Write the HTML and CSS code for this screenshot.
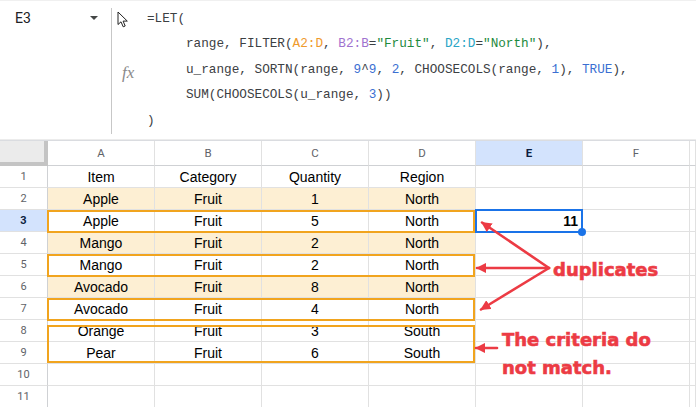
FILE: index.html
```html
<!DOCTYPE html>
<html lang="en">
<head>
<meta charset="utf-8">
<title>LET FILTER SORTN</title>
<link rel="stylesheet" href="styles.css">
</head>
<body>
<div class="page">
  <header class="fbar">
    <div class="namebox"><span class="cellref">E3</span><span class="caret"></span></div>
    <div class="sep"></div>
    <div class="fxcol">
      <svg class="cursor" width="12" height="17" viewBox="0 0 12 17"><path d="M1 1 L1 13.5 L4 10.8 L6.2 15.8 L8.2 15 L6.1 10.1 L10.3 10.1 Z" fill="#fff" stroke="#222" stroke-width="1" stroke-linejoin="round"/></svg>
      <span class="fx">fx</span>
    </div>
    <div class="formula"><div class="ln">=LET(</div><div class="ln ind">range, FILTER(<span class="r1">A2:D</span>, <span class="r2">B2:B</span>=<span class="str">"Fruit"</span>, <span class="r3">D2:D</span>=<span class="str">"North"</span>),</div><div class="ln ind">u_range, SORTN(range, <span class="num">9</span>^<span class="num">9</span>, <span class="num">2</span>, CHOOSECOLS(range, <span class="num">1</span>), <span class="num">TRUE</span>),</div><div class="ln ind">SUM(CHOOSECOLS(u_range, <span class="num">3</span>))</div><div class="ln">)</div></div>
  </header>

  <main class="sheet">
    <div class="corner"></div><div class="ch">A</div><div class="ch">B</div><div class="ch">C</div><div class="ch">D</div><div class="ch sel">E</div><div class="ch">F</div><div class="ch last"></div>

    <div class="rh">1</div><div class="c">Item</div><div class="c">Category</div><div class="c">Quantity</div><div class="c">Region</div><div class="c"></div><div class="c"></div><div class="c"></div>
    <div class="rh">2</div><div class="c hl">Apple</div><div class="c hl">Fruit</div><div class="c hl">1</div><div class="c hl">North</div><div class="c"></div><div class="c"></div><div class="c"></div>
    <div class="rh sel">3</div><div class="c">Apple</div><div class="c">Fruit</div><div class="c">5</div><div class="c">North</div><div class="c val">11</div><div class="c"></div><div class="c"></div>
    <div class="rh">4</div><div class="c hl">Mango</div><div class="c hl">Fruit</div><div class="c hl">2</div><div class="c hl">North</div><div class="c"></div><div class="c"></div><div class="c"></div>
    <div class="rh">5</div><div class="c">Mango</div><div class="c">Fruit</div><div class="c">2</div><div class="c">North</div><div class="c"></div><div class="c"></div><div class="c"></div>
    <div class="rh">6</div><div class="c hl">Avocado</div><div class="c hl">Fruit</div><div class="c hl">8</div><div class="c hl">North</div><div class="c"></div><div class="c"></div><div class="c"></div>
    <div class="rh">7</div><div class="c">Avocado</div><div class="c">Fruit</div><div class="c">4</div><div class="c">North</div><div class="c"></div><div class="c"></div><div class="c"></div>
    <div class="rh">8</div><div class="c">Orange</div><div class="c">Fruit</div><div class="c">3</div><div class="c">South</div><div class="c"></div><div class="c"></div><div class="c"></div>
    <div class="rh">9</div><div class="c">Pear</div><div class="c">Fruit</div><div class="c">6</div><div class="c">South</div><div class="c"></div><div class="c"></div><div class="c"></div>
    <div class="rh">10</div><div class="c"></div><div class="c"></div><div class="c"></div><div class="c"></div><div class="c"></div><div class="c"></div><div class="c"></div>
    <div class="rh">11</div><div class="c"></div><div class="c"></div><div class="c"></div><div class="c"></div><div class="c"></div><div class="c"></div><div class="c"></div>
  </main>

  <div class="box box-r3"></div>
  <div class="box box-r5"></div>
  <div class="box box-r7"></div>
  <div class="box box-r89"></div>
  <div class="selbox"></div>
  <div class="handle"></div>

  <svg class="notes" width="696" height="407" viewBox="0 0 696 407">
    <defs>
      <marker id="ah" viewBox="0 0 10 10" refX="9" refY="5" markerWidth="4" markerHeight="4" orient="auto-start-reverse">
        <path d="M0 0 L10 5 L0 10 Z" fill="#ec3b44"/>
      </marker>
    </defs>
    <g stroke="#ec3b44" stroke-width="2.6" fill="none" stroke-linecap="round">
      <line x1="549" y1="268" x2="482" y2="222.5" marker-end="url(#ah)"/>
      <line x1="549" y1="268" x2="477" y2="268" marker-end="url(#ah)"/>
      <line x1="549" y1="268" x2="481" y2="309.5" marker-end="url(#ah)"/>
      <line x1="497" y1="348" x2="476" y2="348" marker-end="url(#ah)"/>
    </g>
    <text class="note" x="553" y="276">duplicates</text>
    <text class="note" x="502" y="346">The criteria do</text>
    <text class="note" x="502" y="374">not match.</text>
  </svg>
</div>
</body>
</html>
```

FILE: styles.css
```css
html, body {
  margin: 0;
  padding: 0;
  background: #ffffff;
}

body {
  font-family: "Liberation Sans", Arial, sans-serif;
  color: #000;
}

.page {
  position: relative;
  width: 696px;
  height: 407px;
  overflow: hidden;
}

/* ---------- formula bar ---------- */
.fbar {
  display: flex;
  height: 140px;
  box-sizing: border-box;
  border-top: 1px solid #f0f0f0;
  border-bottom: 1px solid #ececec;
}

.namebox {
  width: 111px;
  display: flex;
  align-items: flex-start;
  justify-content: space-between;
  padding: 8px 13px 0 15px;
  box-sizing: border-box;
}

.cellref {
  font-family: Roboto, "Liberation Sans", sans-serif;
  font-size: 14px;
  color: #202124;
  line-height: 18px;
}

.caret {
  width: 0;
  height: 0;
  margin-top: 7px;
  border-left: 4px solid transparent;
  border-right: 4px solid transparent;
  border-top: 4px solid #444746;
}

.sep {
  width: 1px;
  background: #c7c7c7;
  margin: 7px 0 5px;
}

.fxcol {
  width: 35px;
  display: flex;
  flex-direction: column;
  align-items: flex-start;
  padding: 10px 0 0 5px;
  box-sizing: border-box;
}

.cursor {
  display: block;
}

.fx {
  margin: 36px 0 0 5px;
  font-family: "Liberation Serif", serif;
  font-style: italic;
  font-size: 17px;
  color: #8a8a8a;
  line-height: 18px;
}

.formula {
  padding-top: 5px;
  font-family: "Liberation Mono", "DejaVu Sans Mono", monospace;
  font-size: 12.7px;
  line-height: 25.4px;
  color: #3c4043;
}

.ln {
  white-space: pre;
}

.ln.ind {
  padding-left: 39px;
}

.r1 { color: #ef9a2c; }
.r2 { color: #9f72cf; }
.r3 { color: #2aa5c6; }
.str { color: #1e8a3e; }
.num { color: #3b6fd2; }

/* ---------- grid ---------- */
.sheet {
  display: grid;
  grid-template-columns: 48px repeat(6, 107px) 1fr;
  grid-template-rows: 25px repeat(11, 22px);
  border-top: 1px solid #dadce0;
}

.sheet > div {
  box-sizing: border-box;
  border-right: 1px solid #e1e1e1;
  border-bottom: 1px solid #e1e1e1;
  display: flex;
  align-items: center;
  justify-content: center;
  overflow: hidden;
  white-space: nowrap;
}

.corner {
  background: #ebebeb;
  border-right: 4px solid #c4c4c4 !important;
  border-bottom: 4px solid #c4c4c4 !important;
}

.ch {
  font-family: Roboto, "Liberation Sans", sans-serif;
  font-size: 11.5px;
  color: #5f6368;
  border-bottom-color: #cfd1d4 !important;
}

.ch.sel {
  background: #d3e3fd;
  color: #0b1e3f;
  font-weight: 700;
}

.rh {
  font-family: Roboto, "Liberation Sans", sans-serif;
  font-size: 11px;
  color: #5f6368;
  border-right-color: #cfd1d4 !important;
}

.rh.sel {
  background: #d3e3fd;
  color: #0b1e3f;
  font-weight: 700;
}

.c {
  font-size: 14px;
  color: #000;
}

.c.hl {
  background: #fdefd3;
}

.c.val {
  justify-content: flex-end;
  padding-right: 4px;
  font-weight: 700;
}

/* ---------- overlays ---------- */
.box {
  position: absolute;
  left: 47px;
  width: 428px;
  box-sizing: border-box;
  border: 2px solid #f1a41e;
}

.box-r3 { top: 210px; height: 23px; }
.box-r5 { top: 254px; height: 23px; }
.box-r7 { top: 298px; height: 23px; }
.box-r89 { top: 325px; height: 38px; }

.selbox {
  position: absolute;
  left: 475px;
  top: 209px;
  width: 108px;
  height: 24px;
  box-sizing: border-box;
  border: 2px solid #1a73e8;
}

.handle {
  position: absolute;
  left: 578px;
  top: 228px;
  width: 8px;
  height: 8px;
  border-radius: 50%;
  background: #1a73e8;
}

.notes {
  position: absolute;
  left: 0;
  top: 0;
  pointer-events: none;
}

.note {
  font-family: "DejaVu Sans", sans-serif;
  font-weight: 700;
  font-size: 18px;
  fill: #ec3b44;
  stroke: #ec3b44;
  stroke-width: 0.6px;
}
```
